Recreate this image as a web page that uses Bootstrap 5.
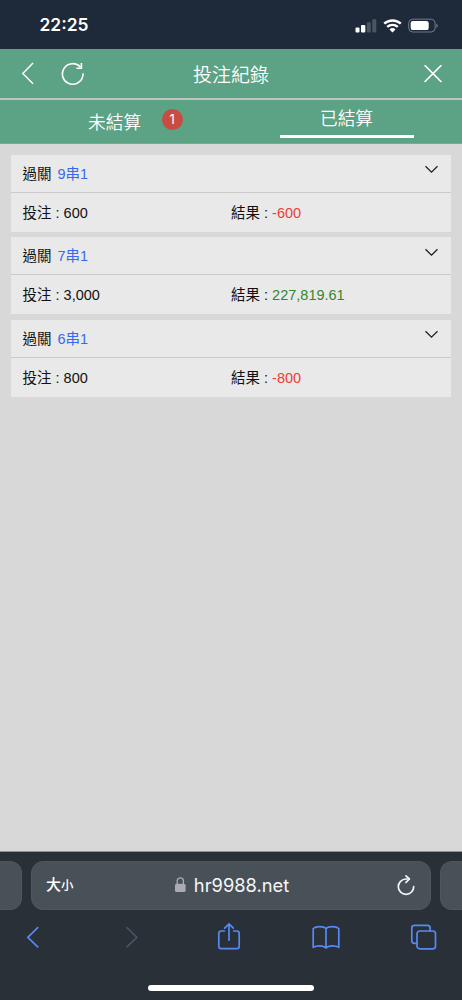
<!DOCTYPE html>
<html lang="zh-Hant">
<head>
<meta charset="utf-8">
<meta name="viewport" content="width=device-width, initial-scale=1">
<title>投注紀錄</title>
<link href="https://cdn.jsdelivr.net/npm/bootstrap@5.3.0/dist/css/bootstrap.min.css" rel="stylesheet">
<style>
body{font-family:"Liberation Sans","Noto Sans CJK TC",sans-serif;background:#d8d8d8;color:#111;font-size:14.5px;line-height:20px}
svg{display:block;fill:none;flex:none}
.screen{height:1000px}
.status-bar{height:49px;background:#1e2a3a;padding:2px 24px 0 39.5px}
.clock{font:600 17.4px/24px Inter,sans-serif;margin-top:-2px}
.title-bar{height:49px;background:#5ca284;padding:0 20px 0 21px}
.title-text{font-size:19px;font-weight:350;line-height:24px;left:0;right:0;top:15px;pointer-events:none}
.tab-bar{height:46px;background:#5ca284;border-top:2px solid #bcc5c0;border-bottom:1px solid #75ab94;font-size:17.7px;font-weight:350;line-height:24px}
.tab-open{padding:11px 0 0 88px}
.count{width:21px;height:21px;background:#c94c42;font:400 13px/21px Inter,sans-serif;margin:-2px 0 0 20.5px}
.tab-settled{padding:7px 0 0}
.tab-line{width:134px;height:3px;background:#fff;margin-top:4px}
.records{padding:10.5px 11px;gap:5.5px}
.record{height:77px;background:#e9e9e9}
.record-head{height:38px;border-bottom:1px solid #cbcbcb;padding:1px 12px 0 11.5px}
.record-body{padding:10px 11.5px 0}
.stake{width:208.5px}
.combo{color:#3768f2;margin-left:6px}
.loss{color:#ee4033}
.win{color:#35872a}
.browser{height:149px;background:#293038;border-top:1px solid #8e9193}
.address-row{height:49px;margin-top:9px;gap:9px}
.field{background:#485058;border:1px solid #4e565e;border-radius:12px}
.field-prev{width:22px;border-radius:0 12px 12px 0;border-left:0}
.field-next{width:22px;border-radius:12px 0 0 12px;border-right:0}
.field-main{padding:0 15px 0 14px}
.host{font:400 18.3px/24px Inter,sans-serif;color:#f6f6f7;left:2px;right:0;top:11px}
.size-big{font-size:15px;font-weight:500}
.size-small{font-size:12.5px;font-weight:500}
.tools{padding:0 24px 0 18.5px;margin-top:13px}
.tools svg{stroke:#568af2;stroke-width:1.7;stroke-linecap:round;stroke-linejoin:round}
.home-line{width:166px;height:6px;background:#fff;margin-top:34px}
</style>
</head>
<body>
<div class="screen d-flex flex-column overflow-hidden">
  <div class="status-bar d-flex align-items-center justify-content-between text-white">
    <span class="clock">22:25</span>
    <svg width="84" height="16" viewBox="0 0 84 16">
      <g fill="#fff"><rect x="1.5" y="9.5" width="4" height="5" rx="1"/><rect x="7" y="7" width="4.3" height="7.5" rx="1"/></g>
      <g fill="#4b5561"><rect x="12.8" y="4.3" width="4" height="10.2" rx="1"/><rect x="18.3" y="1.3" width="4" height="13.2" rx="1"/></g>
      <g stroke="#fff" stroke-width="2.4"><path d="M30.2 5.7a12.3 12.3 0 0 1 16.6 0"/><path d="M33.2 8.9a7.9 7.9 0 0 1 10.6 0"/></g>
      <path fill="#fff" d="M35.5 11.4a4.6 4.6 0 0 1 6 0L38.5 14.5z"/>
      <rect x="54.7" y="1.2" width="26.4" height="12.8" rx="4" stroke="#717a84"/>
      <rect x="56.7" y="3.1" width="18" height="9" rx="2.2" fill="#fff"/>
      <path fill="#717a84" d="M82.3 5.5q1.5.8 1.5 2.2t-1.5 2.2z"/>
    </svg>
  </div>

  <header class="title-bar position-relative d-flex align-items-center text-white">
    <svg width="14" height="24" viewBox="0 0 14 24" stroke="#fff" stroke-width="1.5"><path d="M12 1 1.8 11.5 12 21.8"/></svg>
    <svg class="ms-4" width="28" height="24" viewBox="0 0 28 24" stroke="#fff" stroke-width="1.6"><path d="M24 11.4a10.3 10.3 0 1 1-2.6-6.3"/><path d="M22.4 1V6.2H17.4"/></svg>
    <h1 class="title-text position-absolute text-center mb-0">投注紀錄</h1>
    <svg class="ms-auto" width="18" height="18" viewBox="0 0 18 18" stroke="#fff" stroke-width="1.7"><path d="m.6.2 16.8 16.8M17.4.2.6 17"/></svg>
  </header>

  <nav class="tab-bar row g-0 text-white">
    <div class="col-6 tab-open d-flex align-items-start"><span>未結算</span><span class="count rounded-circle text-center">1</span></div>
    <div class="col-6 tab-settled d-flex flex-column align-items-center"><span>已結算</span><span class="tab-line"></span></div>
  </nav>

  <main class="records d-flex flex-column flex-grow-1">
    <section class="record">
      <div class="record-head d-flex align-items-center"><span>過關</span><span class="combo">9串1</span><svg class="ms-auto mb-2" width="15" height="9" viewBox="0 0 15 9" stroke="#222" stroke-width="1.3"><path d="m1.5 1.2 6 6 6-6"/></svg></div>
      <div class="record-body d-flex"><span class="stake">投注 : 600</span><span>結果 : <span class="loss">-600</span></span></div>
    </section>
    <section class="record">
      <div class="record-head d-flex align-items-center"><span>過關</span><span class="combo">7串1</span><svg class="ms-auto mb-2" width="15" height="9" viewBox="0 0 15 9" stroke="#222" stroke-width="1.3"><path d="m1.5 1.2 6 6 6-6"/></svg></div>
      <div class="record-body d-flex"><span class="stake">投注 : 3,000</span><span>結果 : <span class="win">227,819.61</span></span></div>
    </section>
    <section class="record">
      <div class="record-head d-flex align-items-center"><span>過關</span><span class="combo">6串1</span><svg class="ms-auto mb-2" width="15" height="9" viewBox="0 0 15 9" stroke="#222" stroke-width="1.3"><path d="m1.5 1.2 6 6 6-6"/></svg></div>
      <div class="record-body d-flex"><span class="stake">投注 : 800</span><span>結果 : <span class="loss">-800</span></span></div>
    </section>
  </main>

  <footer class="browser">
    <div class="address-row d-flex">
      <div class="field field-prev"></div>
      <div class="field field-main position-relative flex-grow-1 d-flex align-items-center justify-content-between text-white">
        <div class="d-flex align-items-baseline"><span class="size-big">大</span><span class="size-small">小</span></div>
        <div class="host position-absolute d-flex align-items-center justify-content-center">
          <svg class="me-2" width="11" height="16" viewBox="0 0 11 16"><rect y="6.7" width="10.6" height="8.3" rx="1.6" fill="#aaabb4"/><path d="M2.2 7V4a3.1 3.1 0 0 1 6.2 0v3" stroke="#aaabb4" stroke-width="1.3"/></svg>
          <span>hr9988.net</span>
        </div>
        <svg width="18" height="22" viewBox="0 0 18 22" stroke="#f5f5f6" stroke-width="1.7" stroke-linecap="round" stroke-linejoin="round"><path d="M16.7 11.5A7.7 7.7 0 1 1 9 4h3"/><path d="m9 .9 3.4 3.1L9 7.4"/></svg>
      </div>
      <div class="field field-next"></div>
    </div>
    <div class="tools d-flex justify-content-between">
      <svg width="28" height="28" viewBox="0 0 28 28"><path d="M18.7 4.7 8.8 14.3l9.9 9.6"/></svg>
      <svg width="28" height="28" viewBox="0 0 28 28"><path stroke="#4c535c" d="m11 4.7 9.9 9.6-9.9 9.6"/></svg>
      <svg width="28" height="28" viewBox="0 0 28 28"><path d="M10.3 8H7.2Q4.8 8 4.8 10.4v12.8q0 2.4 2.4 2.4h15.6q2.4 0 2.4-2.4V10.4Q25.2 8 22.8 8h-3.1M15 17.2V.9M10.7 5.2 15 .9l4.3 4.3"/></svg>
      <svg width="28" height="28" viewBox="0 0 28 28"><path d="M14 5.4C11.6 3 4 2.8 1.2 5.5v18.9C4.2 22.4 11.4 22 14 25c2.6-3 9.8-2.6 12.8-.6V5.5C24 2.8 16.4 3 14 5.4zM14 5.4V25"/></svg>
      <svg width="28" height="28" viewBox="0 0 28 28"><rect x="7" y="8" width="18.5" height="17.8" rx="2.8"/><path d="M7 20.3H4.4q-2.6 0-2.6-2.6V4.9q0-2.6 2.6-2.6h13.1q2.6 0 2.6 2.6V8"/></svg>
    </div>
    <div class="home-line rounded-pill mx-auto"></div>
  </footer>
</div>
<script src="https://cdn.jsdelivr.net/npm/bootstrap@5.3.0/dist/js/bootstrap.bundle.min.js"></script>
</body>
</html>
